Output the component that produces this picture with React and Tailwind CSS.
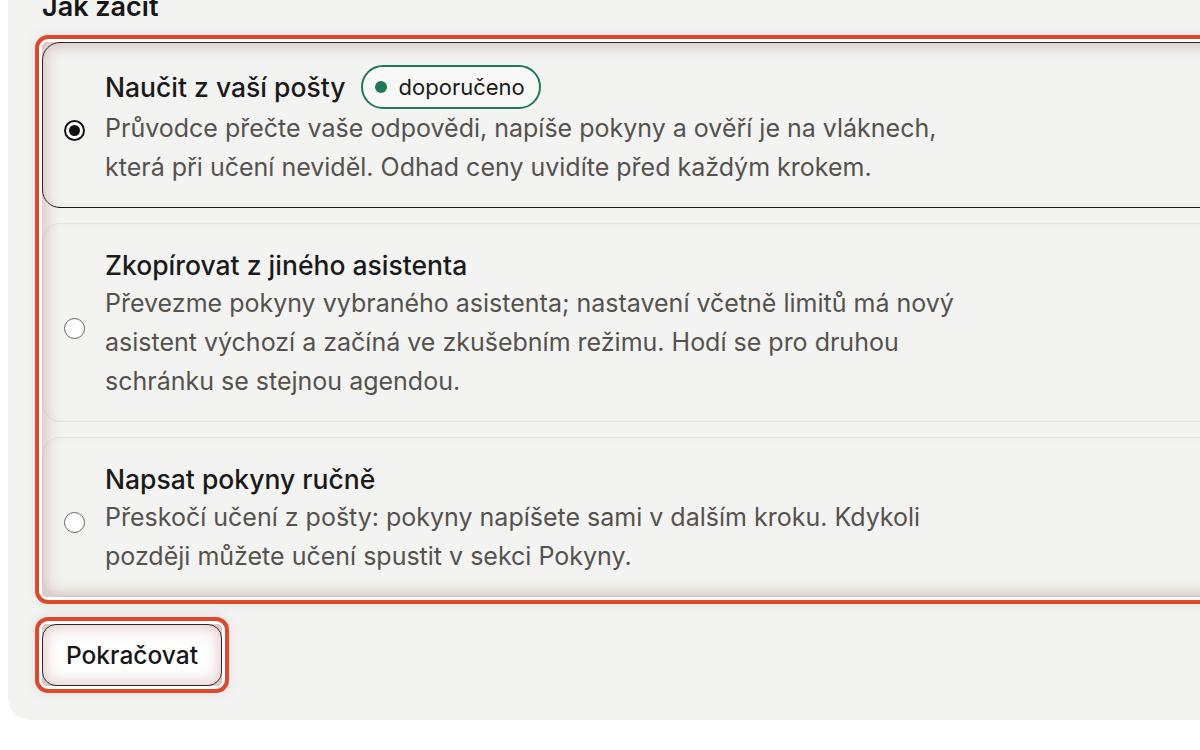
import React, {useState} from 'react';

const options = [
    {
        id: "mail",
        title: "Naučit z vaší pošty",
        badge: "doporučeno",
        lines: [
            "Průvodce přečte vaše odpovědi, napíše pokyny a ověří je na vláknech,",
            "která při učení neviděl. Odhad ceny uvidíte před každým krokem."
        ]
    },
    {
        id: "copy",
        title: "Zkopírovat z jiného asistenta",
        lines: [
            "Převezme pokyny vybraného asistenta; nastavení včetně limitů má nový",
            "asistent výchozí a začíná ve zkušebním režimu. Hodí se pro druhou",
            "schránku se stejnou agendou."
        ]
    },
    {
        id: "manual",
        title: "Napsat pokyny ručně",
        lines: [
            "Přeskočí učení z pošty: pokyny napíšete sami v dalším kroku. Kdykoli",
            "později můžete učení spustit v sekci Pokyny."
        ]
    }
]

// focus highlight drawn over the element
const Highlight = () => (
    <div
        className="pointer-events-none absolute inset-0 rounded-[6px] shadow-[0_0_0_3px_#ffffff,0_0_0_7px_#e0472b,0_0_12px_8px_rgba(0,0,0,0.07),inset_0_0_16px_3px_rgba(150,85,75,0.32)]"/>
)

const Radio = ({checked}) => (
    <span
        className={`mt-[9px] flex h-[21px] w-[21px] shrink-0 items-center justify-center rounded-full bg-white ${checked ? "border-2 border-[#111111]" : "border-[1.5px] border-[#666666]"}`}>
        {checked && <span className="h-[11px] w-[11px] rounded-full bg-[#111111]"/>}
    </span>
)

const App = () => {
    const [selected, setSelected] = useState("mail")

    return (
        <div className="h-[750px] w-[1200px] overflow-hidden bg-white font-['Inter','Noto_Sans',sans-serif]">
            <div className="ml-2 flex h-[720px] w-[1300px] flex-col items-start rounded-bl-[22px] bg-[#f3f3f1] pl-[34px]">
                <h2 className="-mt-[9px] text-[27px] font-semibold leading-[32px] text-[#161616]">Jak začít</h2>

                <div className="relative mt-[19px] flex w-[1300px] flex-col gap-[15px]">
                    {options.map(opt => {
                        const checked = selected === opt.id
                        return (
                            <label key={opt.id}
                                   onClick={() => setSelected(opt.id)}
                                   className={`flex cursor-pointer items-center gap-[20px] rounded-[18px] border pl-[21px] pt-[22px] pb-[20px] shadow-[inset_0_0_10px_rgba(0,0,0,0.035)] ${checked ? "border-[#1a1a1a]" : "border-[#e3e3e0]"}`}>
                                <Radio checked={checked}/>
                                <div>
                                    <div className="flex items-center gap-[15px]">
                                        <span className="text-[26.5px] font-medium leading-[38px] text-[#1a1a1a]">{opt.title}</span>
                                        {opt.badge && (
                                            <span
                                                className="flex h-[44px] items-center gap-[12px] rounded-full border-2 border-[#1e7a55] bg-[#f8f8f6] pl-[12px] pr-[14px] text-[22px] leading-none text-[#1a1a1a]">
                                                <span className="h-[12px] w-[12px] rounded-full bg-[#1e7a55]"/>
                                                {opt.badge}
                                            </span>
                                        )}
                                    </div>
                                    <p className="text-[25px] leading-[39px] text-[#55524e]">
                                        {opt.lines.map((line, i) => (
                                            <span key={i} className="block whitespace-nowrap">{line}</span>
                                        ))}
                                    </p>
                                </div>
                            </label>
                        )
                    })}
                    <Highlight/>
                </div>

                <div className="relative mt-[27px]">
                    <button
                        className="h-[62px] rounded-[14px] border border-[#1a1a1a] bg-white px-[23px] text-[24.5px] font-medium text-[#161616]">
                        Pokračovat
                    </button>
                    <Highlight/>
                </div>
            </div>
        </div>
    );
};

export default App;
